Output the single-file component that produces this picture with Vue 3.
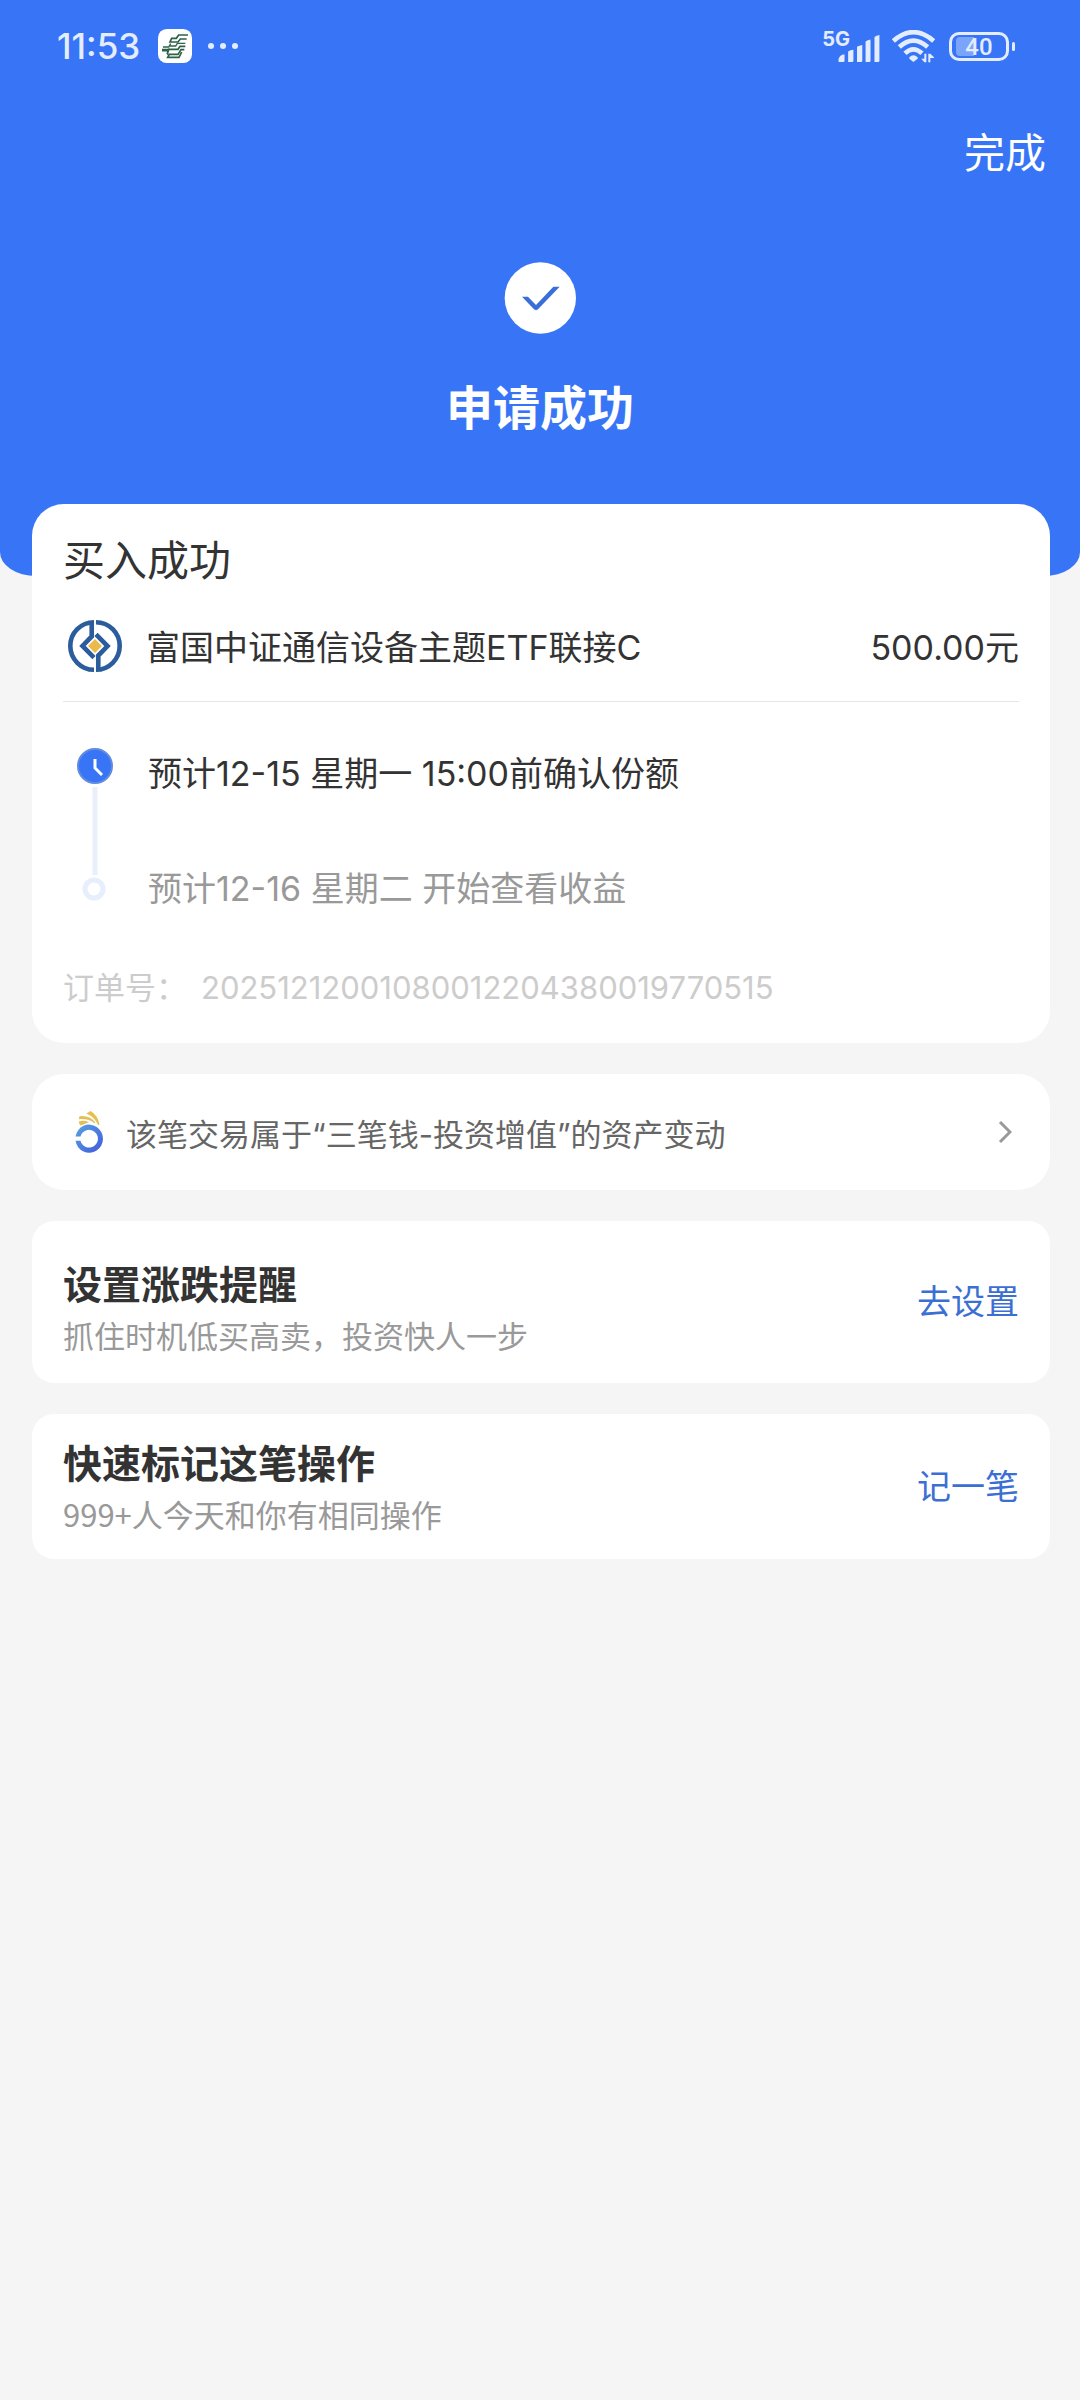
<script setup>
import { ref } from 'vue'

const fund = ref({
  title: '买入成功',
  name: '富国中证通信设备主题ETF联接C',
  amount: '500.00元',
  orderNo: '20251212001080012204380019770515'
})

const steps = [
  { text: '预计12-15 星期一 15:00前确认份额', active: true },
  { text: '预计12-16 星期二 开始查看收益', active: false }
]

const tips = [
  { title: '设置涨跌提醒', desc: '抓住时机低买高卖，投资快人一步', action: '去设置', roomy: true },
  { title: '快速标记这笔操作', desc: '999+人今天和你有相同操作', action: '记一笔', roomy: false }
]
</script>

<template>
  <div class="page">
    <header class="hero">
      <div class="status">
        <div class="status-left">
          <span class="time">11:53</span>
          <svg class="app-badge" viewBox="0 0 102 102" aria-hidden="true">
            <rect width="102" height="102" rx="26" fill="#fff" />
            <g fill="none" stroke="#2d6249" stroke-width="5">
              <path d="M90 18H62L55 28H41L36 39H60L67 30H86" />
              <path d="M38 44L34 51H53L58 43H82" stroke-width="4" />
              <path d="M12 62H32L28 73L31 77" />
              <path d="M15 54H34M12 65H30" />
              <path d="M82 52H66L60 61H32L29 70" />
              <path d="M79 62H69L60 76H34L29 85H63L71 69" />
            </g>
          </svg>
          <svg class="dots" viewBox="0 0 32 8" aria-hidden="true">
            <g fill="#e3edff"><circle cx="4" cy="4" r="3" /><circle cx="16" cy="4" r="3" /><circle cx="28" cy="4" r="3" /></g>
          </svg>
        </div>
        <div class="status-right">
          <div class="signal">
            <span class="net">5G</span>
            <svg class="bars" viewBox="0 0 126 82" aria-hidden="true">
              <g fill="#e3edff">
                <path d="M1 82V72Q4 62 14 59H19V78Q19 82 15 82Z" />
                <path d="M30 82V50Q36 46 46 45V78Q46 82 42 82Z" />
                <path d="M57 82V36Q63 31 73 30V78Q73 82 69 82Z" />
                <path d="M83 82V20Q89 15 98 14V78Q98 82 94 82Z" />
                <path d="M110 82V6Q116 1 125 0V78Q125 82 121 82Z" />
              </g>
            </svg>
          </div>
          <svg class="wifi" viewBox="0 0 129 99" aria-hidden="true">
            <g fill="none" stroke="#e3edff" stroke-width="14">
              <path d="M4 33Q64 -20 125 33" />
              <path d="M22 51Q64 13 107 51" />
              <path d="M39 70Q64 46 90 70" />
            </g>
            <path d="M52 82Q64 70 77 82V86L64 96L52 86Z" fill="#e3edff" />
            <path d="M88 86L97 97H103V71H97V86ZM109 97V71H115L126 82V84H115V97Z" fill="#e3edff" />
          </svg>
          <span class="battery">
            <span class="cell"><span class="level">40</span></span>
            <span class="cap"></span>
          </span>
        </div>
      </div>

      <nav class="nav"><button type="button" class="done">完成</button></nav>

      <div class="result">
        <svg class="tick" viewBox="0 0 216 216" aria-hidden="true">
          <circle cx="109" cy="108" r="107" fill="#fff" />
          <path d="M54 104H72L96 129L148 74H167L102 142Q96 147 90 142Z" fill="#3b6fd8" />
        </svg>
        <h1>申请成功</h1>
      </div>
    </header>

    <main class="cards">
      <section class="card order">
        <h2>{{ fund.title }}</h2>
        <div class="fund">
          <svg class="fund-logo" viewBox="205 412 164 164" aria-hidden="true">
            <g fill="none" stroke="#2b5c9c" stroke-width="14">
              <path d="M284 422A72 72 0 0 0 284 566" />
              <path d="M290 422A72 72 0 0 1 290 566" />
              <path d="M277 422V465L249 494L284 529" />
              <path d="M297 566V523L325 494L290 459" />
            </g>
            <path d="M287 473L308 494L287 515L266 494Z" fill="#ecb94b" />
          </svg>
          <span class="fund-name">{{ fund.name }}</span>
          <span class="amount">{{ fund.amount }}</span>
        </div>

        <div class="progress">
          <svg class="rail" viewBox="0 0 64 154" aria-hidden="true">
            <path d="M32 40V128" stroke="#e9f0fc" stroke-width="5" />
            <circle cx="32" cy="19" r="17" fill="#3875f6" stroke="#5f8be0" stroke-width="2" />
            <path d="M32 12V21L39 28" fill="none" stroke="#fff" stroke-width="3" />
            <circle cx="31" cy="142" r="9" fill="#fff" stroke="#e7effd" stroke-width="5" />
          </svg>
          <ol class="steps">
            <li v-for="step in steps" :key="step.text" :class="{ active: step.active }">{{ step.text }}</li>
          </ol>
        </div>

        <dl class="number">
          <dt>订单号：</dt>
          <dd>{{ fund.orderNo }}</dd>
        </dl>
      </section>

      <a href="#" class="card plan">
        <svg class="plan-logo" viewBox="130 150 90 134" aria-hidden="true">
          <defs>
            <linearGradient id="planRing" x1="0" y1="0" x2="1" y2="1">
              <stop offset="0" stop-color="#58a3e4" />
              <stop offset="1" stop-color="#4059dc" />
            </linearGradient>
          </defs>
          <path d="M134 231A42 43 0 1 1 134 244L149 244A27 27 0 1 0 149 231Z" fill="url(#planRing)" />
          <g fill="#e3bf54">
            <path d="M167 161L180 153Q202 166 207 195L203 196Q192 172 167 161Z" />
            <path d="M146 169Q177 166 194 187L191 190Q176 176 144 178Z" />
            <path d="M144 184Q162 181 175 187L150 197Q144 192 144 184Z" />
          </g>
        </svg>
        <span class="plan-text">该笔交易属于“三笔钱-投资增值”的资产变动</span>
        <svg class="chevron" viewBox="0 0 14 24" aria-hidden="true">
          <path d="M2 2L12 12L2 22" fill="none" stroke="#999" stroke-width="3" />
        </svg>
      </a>

      <section v-for="tip in tips" :key="tip.title" class="card tip" :class="{ roomy: tip.roomy }">
        <div class="tip-body">
          <h3>{{ tip.title }}</h3>
          <p>{{ tip.desc }}</p>
        </div>
        <button type="button" class="action">{{ tip.action }}</button>
      </section>
    </main>
  </div>
</template>

<style>
body {
  margin: 0;
  background: #f5f5f5;
}
</style>

<style scoped>
.page {
  min-height: 100vh;
  background: #f5f5f5;
  color: #333;
  font-family: Inter, "Noto Sans CJK SC", sans-serif;
  font-size: 34px;
}

h1, h2, h3, p, ol, dl, dd {
  margin: 0;
  padding: 0;
}

button {
  padding: 0;
  border: 0;
  background: none;
  font: inherit;
  cursor: pointer;
}

.hero {
  padding-bottom: 140px;
  background: #3875f6;
  color: #fff;
  border-radius: 0 0 36px 36px / 0 0 24px 24px;
}

.status {
  display: flex;
  justify-content: space-between;
  align-items: center;
  height: 92px;
  padding: 0 65px 0 57px;
  color: #e3edff;
}

.status-left,
.status-right {
  display: flex;
  align-items: center;
}

.time {
  font-size: 35px;
  font-weight: 500;
}

.app-badge {
  width: 34px;
  height: 34px;
  margin: 0 15px 0 18px;
}

.dots {
  width: 32px;
  height: 8px;
}

.signal {
  display: flex;
  align-items: flex-end;
}

.net {
  align-self: flex-start;
  margin-right: -12px;
  font-size: 20px;
  font-weight: 700;
  line-height: 16px;
}

.bars {
  width: 42px;
  height: 27px;
  margin-top: 4px;
}

.wifi {
  width: 43px;
  height: 33px;
  margin: 0 14px 0 12px;
}

.battery {
  display: flex;
  align-items: center;
  gap: 3px;
}

.cell {
  box-sizing: border-box;
  width: 60px;
  height: 29px;
  padding: 2px 4px;
  border: 3px solid #e3edff;
  border-radius: 10px;
}

.level {
  display: block;
  height: 19px;
  border-radius: 4px;
  background: linear-gradient(90deg, #7ba4fb 40%, transparent 40%);
  font-family: Roboto, sans-serif;
  font-size: 24px;
  font-weight: 500;
  line-height: 20px;
  text-align: center;
}

.cap {
  width: 3px;
  height: 9px;
  border-radius: 2px;
  background: #e3edff;
}

.nav {
  display: flex;
  justify-content: flex-end;
  align-items: center;
  height: 122px;
  padding: 0 34px;
}

.done {
  color: #fff;
  font-size: 41px;
  line-height: 60px;
}

.result {
  display: flex;
  flex-direction: column;
  align-items: center;
  gap: 46px;
  padding-top: 48px;
}

.tick {
  width: 72px;
  height: 72px;
}

h1 {
  font-size: 47px;
  font-weight: 700;
  line-height: 56px;
}

.cards {
  display: flex;
  flex-direction: column;
  gap: 31px;
  margin-top: -72px;
  padding: 0 30px 0 32px;
}

.card {
  padding: 0 31px;
  background: #fff;
  border-radius: 32px;
}

.order {
  padding-top: 28px;
  padding-bottom: 35px;
}

h2 {
  font-size: 42px;
  font-weight: 400;
  line-height: 58px;
}

.fund {
  display: flex;
  align-items: center;
  height: 111px;
  border-bottom: 1px solid #e6e6e6;
}

.fund-logo {
  width: 54px;
  height: 54px;
  margin: 0 24px 0 5px;
}

.fund-name {
  flex: 1;
}

.progress {
  display: flex;
  align-items: flex-start;
  gap: 21px;
  padding-top: 45px;
}

.rail {
  width: 64px;
  height: 154px;
}

.steps {
  display: flex;
  flex-direction: column;
  gap: 75px;
  margin-top: 7px;
  list-style: none;
  color: #999;
  line-height: 40px;
}

.active {
  color: #333;
}

.number {
  display: flex;
  margin-top: 59px;
  color: #ccc;
  font-size: 31px;
  line-height: 40px;
}

.number dt {
  margin-right: 14px;
}

.plan {
  display: flex;
  align-items: center;
  height: 116px;
  color: #666;
  font-size: 31px;
  text-decoration: none;
}

.plan-logo {
  width: 30px;
  height: 44px;
  margin: 0 22px 0 11px;
}

.plan-text {
  flex: 1;
}

.chevron {
  width: 14px;
  height: 24px;
  margin-right: 7px;
}

.tip {
  display: flex;
  justify-content: space-between;
  align-items: center;
  border-radius: 22px;
}

.tip-body {
  padding: 25px 0 23px;
}

.roomy .tip-body {
  padding: 39px 0 26px;
}

h3 {
  font-size: 39px;
  font-weight: 700;
  line-height: 50px;
}

.tip p {
  margin-top: 3px;
  color: #999;
  font-family: "Noto Sans CJK SC", sans-serif;
  font-size: 31px;
  line-height: 44px;
}

.action {
  color: #3b6fd4;
  line-height: 44px;
}
</style>
